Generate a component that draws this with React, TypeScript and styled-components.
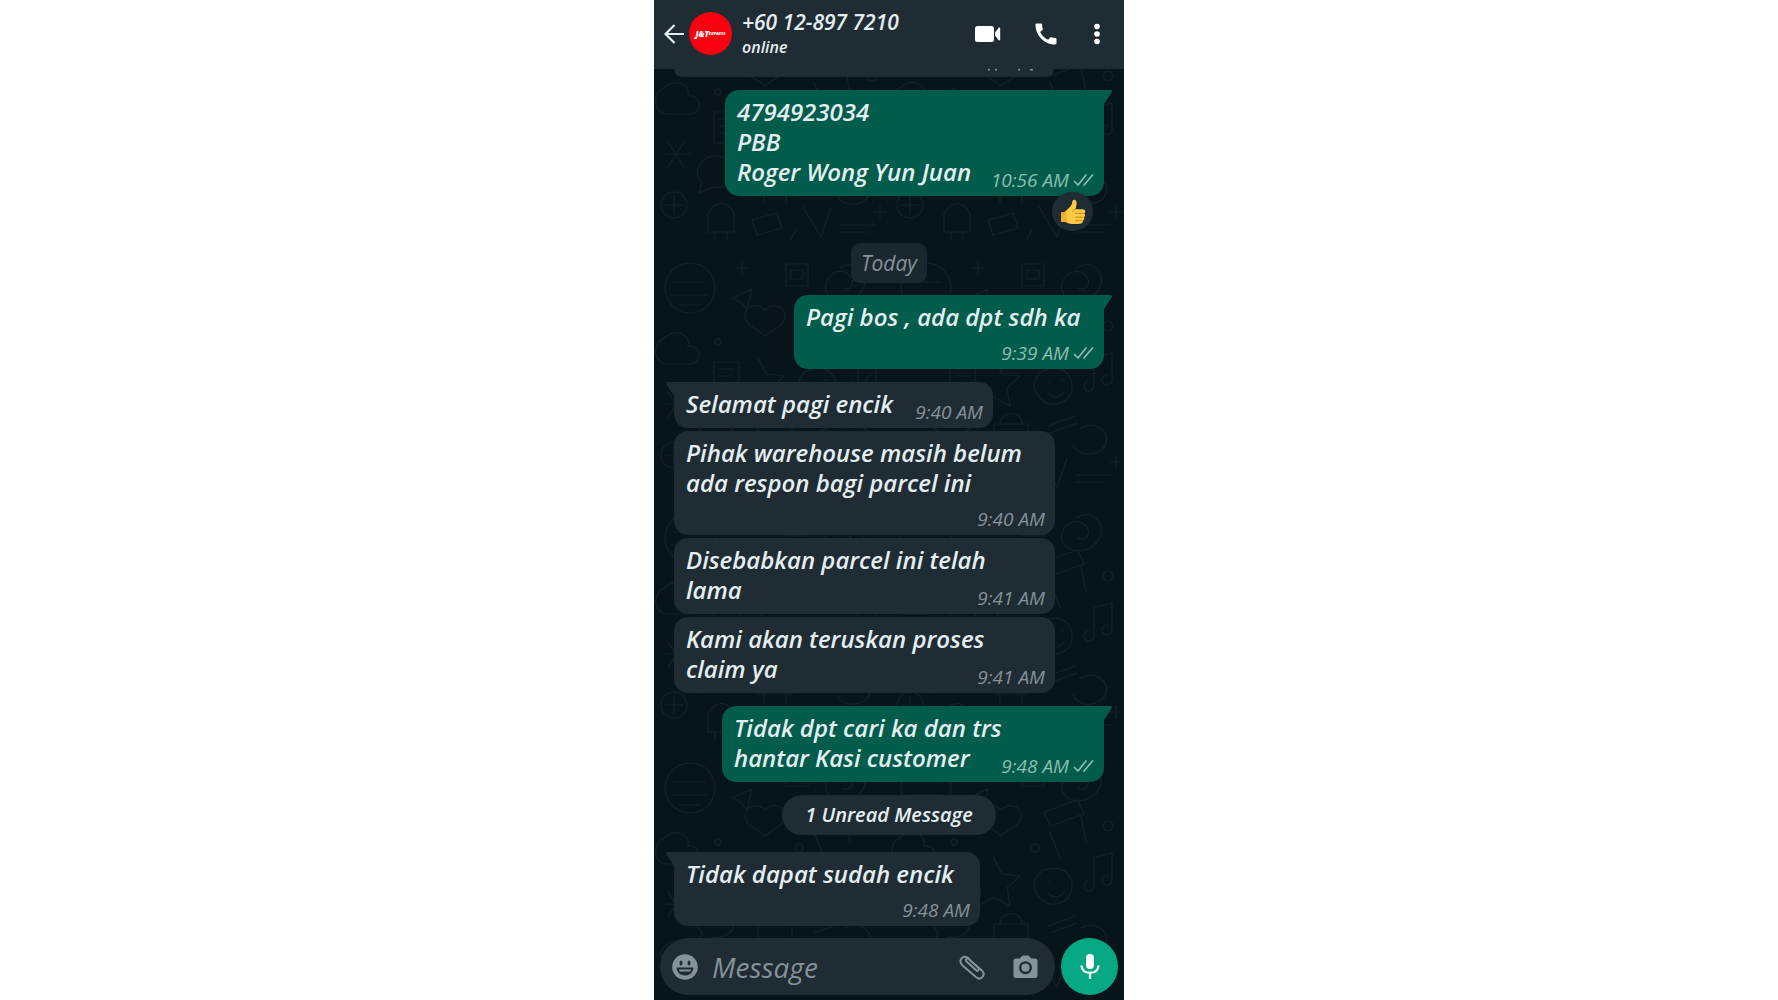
import React from "react";
import styled, { createGlobalStyle } from "styled-components";

const color = {
  panel: "#1f2c33",
  wallpaper: "#07141a",
  doodle: "#12212a",
  sent: "#015c4b",
  text: "#e4eef0",
  muted: "#84929a",
  sentMuted: "#8fbcb0",
  accent: "#06a884",
};

const Global = createGlobalStyle`
  *, *::before, *::after { box-sizing: border-box; }
  body {
    margin: 0;
    background: #ffffff;
    font-family: "Open Sans", "Noto Sans", sans-serif;
    font-style: italic;
  }
  button, input { font: inherit; }
`;

const Phone = styled.main`
  position: relative;
  display: flex;
  flex-direction: column;
  width: 100%;
  max-width: 470px;
  min-height: 100vh;
  margin: 0 auto;
  background: ${color.wallpaper};
  color: ${color.text};
  isolation: isolate;
  overflow: hidden;
`;

const Wallpaper = styled.svg`
  position: absolute;
  inset: 0;
  z-index: -1;
  width: 100%;
  height: 100%;
`;

const Header = styled.header`
  display: flex;
  align-items: center;
  height: 69px;
  padding: 0 21px 2px 10px;
  background: ${color.panel};
`;

const IconButton = styled.button`
  display: flex;
  align-items: center;
  justify-content: center;
  flex: none;
  padding: 0;
  border: 0;
  background: none;
  color: inherit;
  cursor: pointer;
  svg { display: block; }
`;

const Avatar = styled.div`
  display: flex;
  align-items: center;
  justify-content: center;
  flex: none;
  width: 43px;
  height: 43px;
  margin: 0 10px 0 5px;
  border-radius: 50%;
  background: #fb0110;
  color: #ffffff;
  font: italic 800 8px/10px "Open Sans", sans-serif;
  small { font-size: 4px; }
`;

const Contact = styled.div`
  flex: 1;
  min-width: 0;
  white-space: nowrap;
`;

const ContactName = styled.h1`
  margin: 0;
  font-size: 21px;
  line-height: 26px;
  font-weight: 600;
`;

const Status = styled.p`
  margin: 0;
  font-size: 16px;
  line-height: 24px;
  font-weight: 600;
`;

const Actions = styled.div`
  display: flex;
  align-items: center;
  gap: 31px;
  color: #ffffff;
`;

const Chat = styled.section`
  display: flex;
  flex-direction: column;
  flex: 1;
  padding: 0 20px 11px;
`;

const EarlierMessage = styled.div`
  width: 380px;
  max-width: 100%;
  height: 8px;
  margin-bottom: 13px;
  border-radius: 0 0 14px 14px;
  background: ${color.panel};
  svg { display: block; margin-left: auto; }
`;

const Group = styled.div<{ $sent?: boolean }>`
  display: flex;
  flex-direction: column;
  align-items: ${(p) => (p.$sent ? "flex-end" : "flex-start")};
  gap: 3px;
  margin-bottom: 13px;
  &:last-child { margin-bottom: 0; }
`;

const Bubble = styled.article<{ $sent?: boolean; $tail?: boolean; $width: number; $stacked?: boolean }>`
  position: relative;
  display: grid;
  row-gap: 8px;
  width: ${(p) => p.$width}px;
  max-width: 100%;
  padding: 7px 10px 6px 12px;
  border-radius: 14px;
  border-top-left-radius: ${(p) => (p.$tail && !p.$sent ? 0 : 14)}px;
  border-top-right-radius: ${(p) => (p.$tail && p.$sent ? 0 : 14)}px;
  background: ${(p) => (p.$sent ? color.sent : color.panel)};
  & > * { grid-column: 1; }
  & > footer { grid-row: ${(p) => (p.$stacked ? 2 : 1)}; }
  ${(p) =>
    p.$tail &&
    `&::before {
      content: "";
      position: absolute;
      top: 0;
      ${p.$sent ? "left: 100%" : "right: 100%"};
      width: 8px;
      height: 14px;
      background: inherit;
      clip-path: ${p.$sent ? "polygon(0 0, 90% 0, 100% 12%, 0 100%)" : "polygon(100% 0, 10% 0, 0 12%, 100% 100%)"};
    }`}
`;

const Body = styled.p`
  grid-row: 1;
  margin: 0;
  padding-bottom: 3px;
  font-size: 24px;
  line-height: 30px;
  font-weight: 600;
  white-space: nowrap;
`;

const Line = styled.span`
  display: block;
`;

const Meta = styled.footer<{ $sent?: boolean }>`
  display: flex;
  align-items: center;
  align-self: end;
  justify-self: end;
  gap: 4px;
  color: ${(p) => (p.$sent ? color.sentMuted : color.muted)};
  font-size: 19px;
  line-height: 20px;
`;

const Reaction = styled.span`
  position: absolute;
  right: 11px;
  bottom: -35px;
  display: grid;
  place-items: center;
  width: 41px;
  height: 39px;
  border-radius: 20px;
  background: ${color.panel};
`;

const DayLabel = styled.div`
  align-self: center;
  margin: 34px 0 12px;
  padding: 5px 10px;
  border-radius: 9px;
  background: #1b272e;
  color: ${color.muted};
  font-size: 21px;
  line-height: 30px;
  font-weight: 500;
`;

const UnreadLabel = styled.div`
  align-self: center;
  margin-bottom: 17px;
  padding: 5px 23px;
  border-radius: 20px;
  background: ${color.panel};
  font-size: 20px;
  line-height: 30px;
  font-weight: 600;
`;

const Composer = styled.form`
  display: flex;
  align-items: center;
  gap: 6px;
  padding: 0 6px 5px;
`;

const Field = styled.div`
  display: flex;
  align-items: center;
  flex: 1;
  min-width: 0;
  height: 57px;
  padding: 0 17px 0 12px;
  border-radius: 29px;
  background: ${color.panel};
  color: ${color.muted};
`;

const MessageInput = styled.input`
  flex: 1;
  min-width: 0;
  padding: 0 14px;
  border: 0;
  outline: 0;
  background: none;
  color: ${color.text};
  font-size: 28px;
  line-height: 38px;
  &::placeholder { color: ${color.muted}; opacity: 1; }
`;

const FieldActions = styled.div`
  display: flex;
  align-items: center;
  gap: 27px;
`;

const MicButton = styled(IconButton)`
  width: 57px;
  height: 57px;
  border-radius: 50%;
  background: ${color.accent};
  color: #ffffff;
`;

const Ticks = () => (
  <svg width="21" height="16" viewBox="0 0 21 16" fill="none" stroke="currentColor" strokeWidth="1.7" strokeLinecap="round" strokeLinejoin="round" aria-label="Delivered">
    <path d="M1.500 9.500 5 13 13 3M11 13 19.500 3" />
  </svg>
);

const Thumb = () => (
  <svg width="26" height="26" viewBox="0 0 26 26" role="img" aria-label="Thumbs up">
    <path d="M1 13.500c2.500.2 4-.4 5.500-2.200 2.800-2.500 5.100-4.600 5.600-7.300.3-1.600.3-3 1.600-3.300 2.300-.4 3.300 2.300 2.900 4.900-.3 1.700-.8 3.200-1.200 4.600h7.300c3.200.2 3.100 3.400 1.400 4 1.600.9 1.300 3.300-.3 3.900 1.100 1.200.5 3-1 3.500.5 1.800-.7 2.900-2.600 3.100-3.600.4-8.200.5-11.300-.3-2-.5-3-1.500-4.600-1.600H1z" fill="#fccb45" />
    <path d="M1 13.500c2.500.2 4-.4 5.500-2.200-.8 3.700-1.100 7.300 1.900 12.300L4 22.800H1z" fill="#f7ac2c" />
    <path d="M15.500 14.300h8M15.500 18.200h7.600M15.800 21.700h6.300M14.900 10.200c-1.700.4-2.300 1.300-2.200 2.400" fill="none" stroke="#d98a12" strokeWidth="1" strokeLinecap="round" />
  </svg>
);

const doodles = (
  <pattern id="doodles" width="236" height="250" patternUnits="userSpaceOnUse">
    <g fill="none" stroke={color.doodle} strokeWidth="1.200" strokeLinecap="round" strokeLinejoin="round">
      <circle cx="36" cy="38" r="25" />
      <path d="M20 32h31M17 45h36M24 55h22" />
      <path d="M88 12v12M82 18h12M78 48l20-9-5 21-6-8zM132 14h22v22h-22zM137 20h12v9h-12z" />
      <path d="M186 18c18-12 34 10 20 25s-38 6-34-9 18-15 24-8 0 16-8 12" />
      <path d="M111 60c8-8 20-4 20 6s-14 14-20 20c-6-6-20-10-20-20s12-14 20-6z" />
      <path d="M154 62l34-12 6 14-34 12zM160 82l10 26M191 66l5 26" />
      <circle cx="218" cy="76" r="5" /><circle cx="145" cy="98" r="4" /><circle cx="64" cy="92" r="3" />
      <path d="M10 88c12-11 27-3 24 8 12-2 16 14 4 18H12c-14-3-13-21-2-26z" />
      <path d="M60 112h25v31H60zM65 119h15M65 126h15M65 133h8" />
      <path d="M104 108l8 16 18 2-13 12 3 18-16-9-16 9 3-18" />
      <path d="M152 121c18-8 31 2 30 17s-20 21-31 11-7-21 1-28zM157 132h3M171 130h3M158 143c5 6 12 5 16-1" />
      <path d="M204 108v28M204 108l18-5v27M204 136a5 5 0 1 1-5-5M222 130a5 5 0 1 1-5-5" />
      <path d="M14 142l16 25M30 142l-16 25M9 154h28" />
      <path d="M45 166c8-16 33-12 35 5 1 11-10 18-21 16l-14 6 3-11c-5-4-6-10-3-16z" />
      <path d="M104 174h34v20h-34zM110 194v9M132 194v9M110 174c0-14 22-14 22 0" />
      <path d="M158 176l27-10M160 183l27-10M191 178c12-8 29 2 25 15s-27 16-33 2" />
      <circle cx="20" cy="205" r="13" /><path d="M11 205h18M20 196v18" />
      <path d="M54 214c7-14 20-14 26 0v18H54zM61 232v8M73 232v8M98 220l25-7 5 15-25 7z" />
      <path d="M149 207l18 30 10-29M186 225h35M186 232h28M142 230l-5 9M226 206v12M220 212h12" />
    </g>
  </pattern>
);

type Message = { lines: string[]; time: string; width: number; sent?: boolean; tail?: boolean; stacked?: boolean; liked?: boolean };

const MessageBubble = ({ lines, time, width, sent, tail, stacked, liked }: Message) => (
  <Bubble $sent={sent} $tail={tail} $width={width} $stacked={stacked}>
    <Body>
      {lines.map((line) => (
        <Line key={line}>{line}</Line>
      ))}
    </Body>
    <Meta $sent={sent}>
      <time>{time}</time>
      {sent && <Ticks />}
    </Meta>
    {liked && (
      <Reaction>
        <Thumb />
      </Reaction>
    )}
  </Bubble>
);

const morning: Message[] = [
  { lines: ["Selamat pagi encik"], time: "9:40 AM", width: 319, tail: true },
  { lines: ["Pihak warehouse masih belum", "ada respon bagi parcel ini"], time: "9:40 AM", width: 381, stacked: true },
  { lines: ["Disebabkan parcel ini telah", "lama"], time: "9:41 AM", width: 381 },
  { lines: ["Kami akan teruskan proses", "claim ya"], time: "9:41 AM", width: 381 },
];

export default function App() {
  return (
    <>
      <Global />
      <Phone>
        <Wallpaper aria-hidden="true">
          <defs>{doodles}</defs>
          <rect width="100%" height="100%" fill="url(#doodles)" />
        </Wallpaper>
        <Header>
          <IconButton aria-label="Back">
            <svg width="20" height="20" viewBox="0 0 20 20" fill="none" stroke="currentColor" strokeWidth="2.200">
              <path d="M20 10H2M10.500 1 1.500 10l9 9" />
            </svg>
          </IconButton>
          <Avatar>
            J&amp;T<small>EXPRESS</small>
          </Avatar>
          <Contact>
            <ContactName>+60 12-897 7210</ContactName>
            <Status>online</Status>
          </Contact>
          <Actions>
            <IconButton aria-label="Video call">
              <svg width="26" height="18" viewBox="0 0 26 18" fill="currentColor">
                <rect x="0" y="1" width="19" height="16" rx="2.500" />
                <path d="M20 7.500 23.500 3c.8-.8 1.700-.5 1.700.6v10.800c0 1.100-.9 1.400-1.700.6L20 10.500z" />
              </svg>
            </IconButton>
            <IconButton aria-label="Voice call">
              <svg width="28" height="28" viewBox="0 0 24 24" fill="currentColor">
                <path d="M20.010 15.380c-1.230 0-2.420-.2-3.530-.56a.977.977 0 0 0-1.010.240l-1.570 1.970c-2.830-1.350-5.480-3.900-6.890-6.830l1.950-1.660c.27-.28.35-.67.24-1.020-.37-1.110-.56-2.300-.56-3.530 0-.54-.45-.99-.99-.99H4.190C3.650 3 3 3.240 3 3.990 3 13.280 10.730 21 20.010 21c.71 0 .99-.63.99-1.180v-3.450c0-.54-.45-.99-.99-.99z" />
              </svg>
            </IconButton>
            <IconButton aria-label="More options">
              <svg width="12" height="22" viewBox="0 0 12 22" fill="currentColor">
                <circle cx="6" cy="3.500" r="2.800" />
                <circle cx="6" cy="11" r="2.800" />
                <circle cx="6" cy="18.500" r="2.800" />
              </svg>
            </IconButton>
          </Actions>
        </Header>
        <Chat>
          <EarlierMessage>
            <svg width="70" height="3" viewBox="0 0 70 3" fill={color.muted} aria-hidden="true">
              <path d="M4 0h2v1.500H4zM11 0h2v1.500h-2zM34 0h2v1.500h-2zM46 0h3v1.500h-3z" />
            </svg>
          </EarlierMessage>
          <Group $sent>
            <MessageBubble sent tail liked width={379} lines={["4794923034", "PBB", "Roger Wong Yun Juan"]} time="10:56 AM" />
          </Group>
          <DayLabel>Today</DayLabel>
          <Group $sent>
            <MessageBubble sent tail stacked width={310} lines={["Pagi bos , ada dpt sdh ka"]} time="9:39 AM" />
          </Group>
          <Group>
            {morning.map((m) => (
              <MessageBubble key={m.lines[0]} {...m} />
            ))}
          </Group>
          <Group $sent>
            <MessageBubble sent tail width={382} lines={["Tidak dpt cari ka dan trs", "hantar Kasi customer"]} time="9:48 AM" />
          </Group>
          <UnreadLabel>1 Unread Message</UnreadLabel>
          <Group>
            <MessageBubble tail stacked width={306} lines={["Tidak dapat sudah encik"]} time="9:48 AM" />
          </Group>
        </Chat>
        <Composer onSubmit={(e) => e.preventDefault()}>
          <Field>
            <IconButton type="button" aria-label="Emoji">
              <svg width="26" height="26" viewBox="0 0 26 26">
                <circle cx="13" cy="13" r="12.800" fill="currentColor" />
                <g fill={color.panel}>
                  <ellipse cx="9" cy="9" rx="1.500" ry="2.500" />
                  <ellipse cx="17" cy="9" rx="1.500" ry="2.500" />
                  <path d="M4.500 13.500h17c-.4 5-3.900 8-8.500 8s-8.100-3-8.500-8z" />
                </g>
                <path d="M7 15.500h12l-.8 2H7.800z" fill="currentColor" />
              </svg>
            </IconButton>
            <MessageInput type="text" placeholder="Message" aria-label="Message" />
            <FieldActions>
              <IconButton type="button" aria-label="Attach">
                <svg width="28" height="28" viewBox="0 0 28 28" fill="none" stroke="currentColor" strokeWidth="2" strokeLinecap="round">
                  <path d="M19.500 18.200 8.500 8.600c-1.700-1.500.3-4.200 2.200-2.600l13.200 11.600c4.400 4.200-.8 10.500-5.700 6.700L4.600 12.400C-.6 7.400 5.200.9 10.600 5.200M8.500 8.600l9.400 8.300c2 1.800 4-.6 2.200-2.300l-8-7" />
                </svg>
              </IconButton>
              <IconButton type="button" aria-label="Camera">
                <svg width="25" height="24" viewBox="0 0 25 24">
                  <path d="M8.500 1.500Q9.300.5 10.500.5h4q1.200 0 2 1L18.200 3.500H22q2.500 0 2.500 2.500v14.500q0 2.500-2.500 2.500H3Q.5 23 .5 20.500V6Q.5 3.500 3 3.500h3.800z" fill="currentColor" />
                  <circle cx="12.500" cy="12.700" r="5.300" fill="none" stroke={color.panel} strokeWidth="2.400" />
                </svg>
              </IconButton>
            </FieldActions>
          </Field>
          <MicButton type="button" aria-label="Record voice message">
            <svg width="20" height="27" viewBox="0 0 20 27">
              <rect x="6" y="1" width="8" height="15" rx="4" fill="currentColor" />
              <path d="M1.500 12.500c.3 4.800 3.800 7.300 8.500 7.300s8.200-2.500 8.500-7.300M10 20v6" fill="none" stroke="currentColor" strokeWidth="2.200" />
            </svg>
          </MicButton>
        </Composer>
      </Phone>
    </>
  );
}
